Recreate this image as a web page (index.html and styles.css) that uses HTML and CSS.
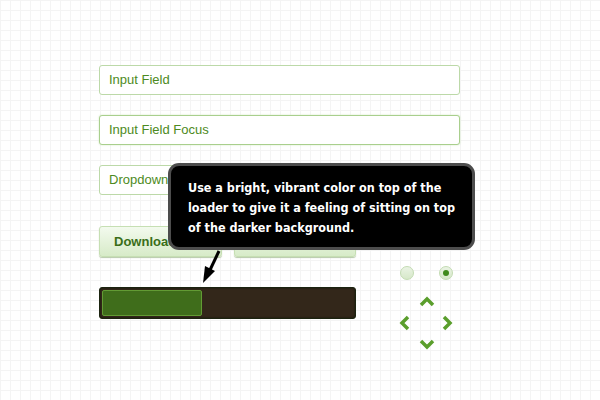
FILE: index.html
```html
<!DOCTYPE html>
<html lang="en">
<head>
  <meta charset="UTF-8">
  <title>UI Kit</title>
  <link rel="stylesheet" href="styles.css">
</head>
<body>
  <div class="kit">
    <div class="field">Input Field</div>
    <div class="field focus">Input Field Focus</div>

    <div class="lower">
      <div class="left">
        <div class="field">Dropdown Menu</div>
        <div class="buttons">
          <div class="btn">Download</div>
          <div class="btn"></div>
        </div>
        <div class="loader">
          <div class="loader-fill" style="width: 40%"></div>
        </div>
      </div>

      <div class="right">
        <div class="radios">
          <span class="radio"></span>
          <span class="radio checked"></span>
        </div>
        <svg class="dpad" width="60" height="60" viewBox="0 0 60 60">
          <g fill="none" stroke="#5a9e2c" stroke-width="3.5" stroke-linecap="butt">
            <polyline points="27,10 33,4 39,10"/>
            <polyline points="27,46 33,52 39,46"/>
            <polyline points="14,22 8,28 14,34"/>
            <polyline points="50,22 56,28 50,34"/>
          </g>
        </svg>
      </div>
    </div>

    <!-- callout -->
    <div class="tip">
      Use a bright, vibrant color on top of the loader to give it a feeling of sitting on top of the darker background.
    </div>
    <svg class="tip-arrow" width="24" height="34" viewBox="0 0 24 34">
      <line x1="19" y1="1" x2="10" y2="20" stroke="#000" stroke-width="3"/>
      <polygon points="5,16 15,21 3,33" fill="#000"/>
    </svg>
  </div>
</body>
</html>
```

FILE: styles.css
```css
body {
  margin: 0;
  width: 600px;
  height: 400px;
  overflow: hidden;
  font-family: 'Liberation Sans', Arial, sans-serif;
  background-color: #fff;
  background-image:
    linear-gradient(#f4f4f4 1px, transparent 1px),
    linear-gradient(90deg, #f4f4f4 1px, transparent 1px);
  background-size: 10px 10px;
}

.kit {
  position: relative;
  padding: 65px 0 0 99px;
  display: flex;
  flex-direction: column;
  gap: 20px;
}

.field {
  width: 361px;
  height: 30px;
  box-sizing: border-box;
  padding: 0 9px;
  line-height: 28px;
  font-size: 13px;
  color: #4d8a22;
  background: #fff;
  border: 1px solid #bcd9a8;
  border-radius: 3px;
}

.field.focus {
  border: 1.5px solid #a9cf8d;
  box-shadow: 0 0 2px #cfe6bf;
}

.lower {
  display: grid;
  grid-template-columns: 257px 100px;
  column-gap: 38px;
}

.left {
  display: flex;
  flex-direction: column;
}

.left .field {
  width: 257px;
}

.buttons {
  display: flex;
  gap: 12px;
  margin-top: 31px;
}

.btn {
  flex: 1;
  height: 31px;
  box-sizing: border-box;
  padding-left: 14px;
  line-height: 30px;
  font-size: 13px;
  font-weight: bold;
  color: #3a6e18;
  background: linear-gradient(#f3faee, #d7ebc8);
  border: 1px solid #c6dfb3;
  border-radius: 3px;
  box-shadow: 0 1px 1px #b7c9aa;
}

.loader {
  margin-top: 30px;
  height: 32px;
  box-sizing: border-box;
  padding: 2px;
  background: #33271a;
  border: 1px solid #1c2410;
  border-radius: 3px;
  box-shadow: inset 0 0 2px #0d1406;
}

.loader-fill {
  height: 100%;
  box-sizing: border-box;
  background: #3f6d1b;
  border: 1px solid #629b34;
  border-radius: 2px;
}

.right {
  display: flex;
  flex-direction: column;
  padding-top: 101px;
}

.radios {
  display: flex;
  gap: 25px;
  padding-left: 6px;
}

.radio {
  width: 14px;
  height: 14px;
  box-sizing: border-box;
  border-radius: 50%;
  background: linear-gradient(#eaf3e4, #d6e8c9);
  border: 1px solid #c3dbb2;
  display: flex;
  align-items: center;
  justify-content: center;
}

.radio.checked::after {
  content: "";
  width: 6px;
  height: 6px;
  border-radius: 50%;
  background: #3f8a1c;
}

.dpad {
  margin-top: 15px;
}

.tip {
  position: absolute;
  left: 168px;
  top: 163px;
  width: 307px;
  height: 87px;
  box-sizing: border-box;
  padding: 12px 10px 0 17px;
  background: #000;
  border: 3px solid #4d4d4d;
  border-radius: 11px;
  color: #fff;
  font-family: 'DejaVu Sans', sans-serif;
  font-stretch: condensed;
  font-weight: bold;
  font-size: 12.5px;
  line-height: 20px;
}

.tip-arrow {
  position: absolute;
  left: 200px;
  top: 250px;
}
```
